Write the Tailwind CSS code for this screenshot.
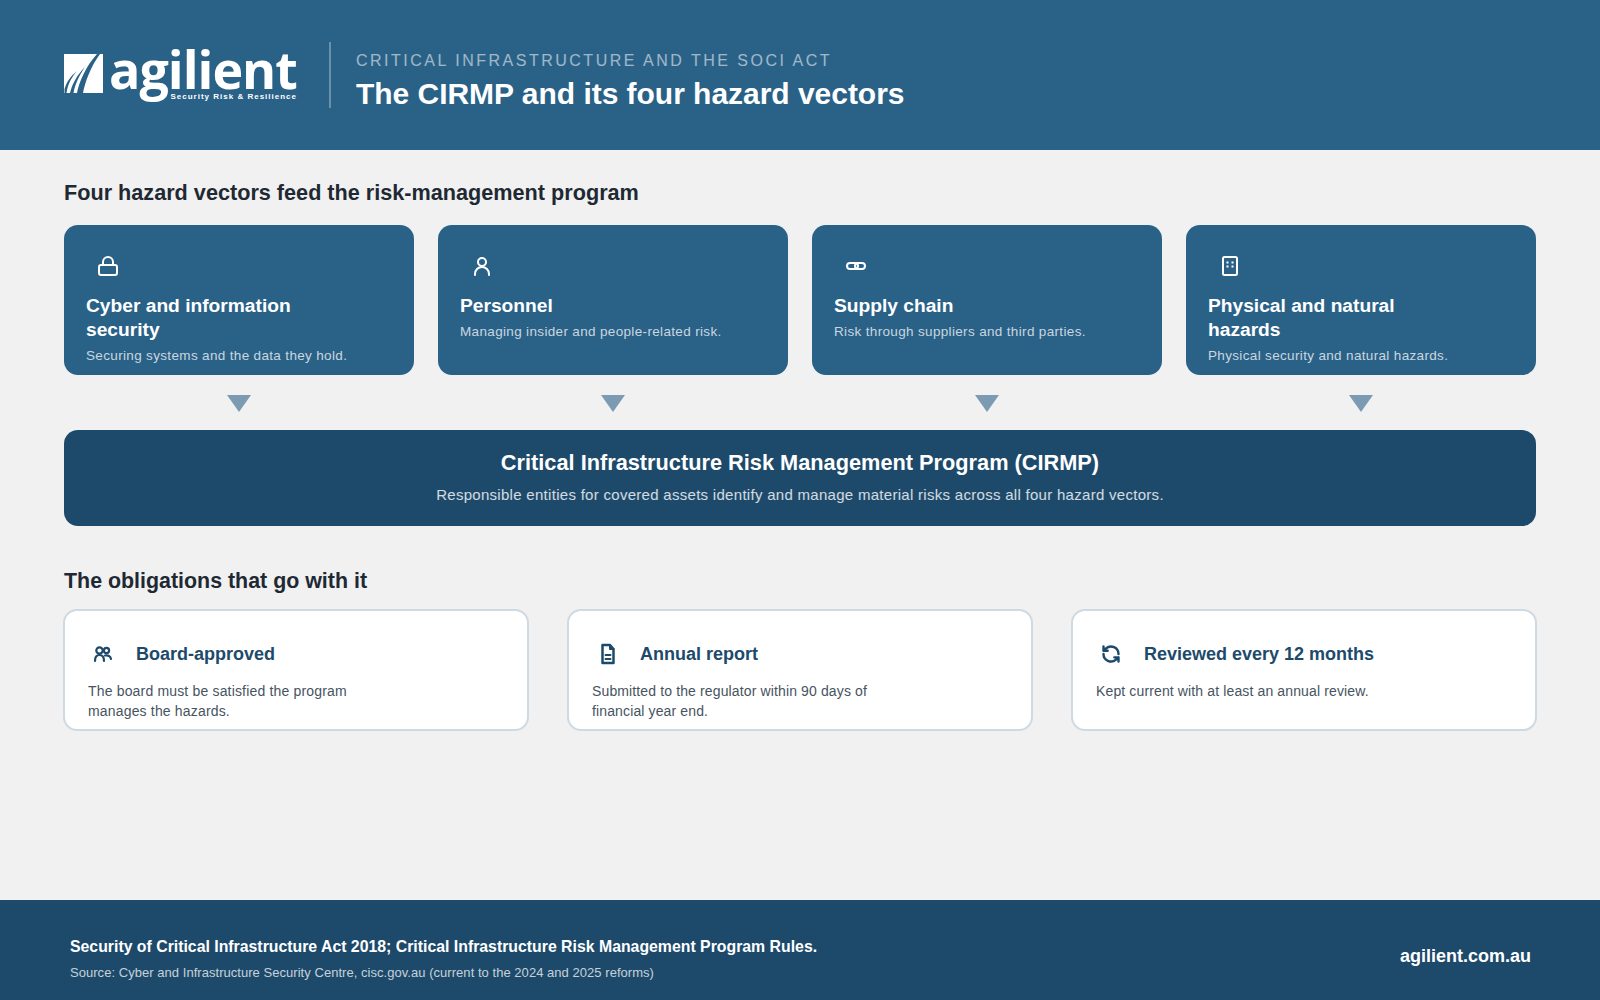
<!doctype html>
<html><head><meta charset="utf-8"><script src="https://cdn.jsdelivr.net/npm/@tailwindcss/browser@4"></script></head>
<body class="m-0">
<div class="w-[1600px] h-[1000px] flex flex-col bg-[#f1f1f1] font-['Liberation_Sans',Arial,sans-serif] overflow-hidden">
<header class="h-[150px] shrink-0 bg-[#2a6187] flex items-center px-16 text-white">
  <div class="w-[232px] h-[60px] flex items-start gap-[6px] shrink-0">
    <svg class="w-[39px] h-[39px] mt-[9px] shrink-0" viewBox="0 0 39 39"><rect width="39" height="39" fill="#fff"/><path fill="#2a6187" d="M0.5 35C3 27 7 22 13 17C8 23 4 29 2.500 39H0.500ZM6 39C8 30 13 21 21 13C15 22 11 30 9.500 39ZM13 39C15 28 22 12 33 0H36C27 12 21 28 19 39Z"/></svg>
    <div class="relative h-[60px] w-[187px]">
      <span class="absolute left-0 top-[-11px] font-['Open_Sans',sans-serif] font-bold text-[52px] leading-[70px] tracking-[-1px] whitespace-nowrap">agilient</span>
      <span class="absolute right-[-1px] top-[47px] text-[8px] leading-[10px] font-bold tracking-[1px] whitespace-nowrap">Security Risk &amp; Resilience</span>
    </div>
  </div>
  <div class="w-[2px] h-[66px] bg-white/30 ml-[33px] mr-[25px]"></div>
  <div class="pt-[12px]">
    <div class="text-[16px] leading-[22px] tracking-[2.5px] uppercase text-white/55">Critical infrastructure and the SOCI Act</div>
    <div class="text-[30px] leading-[38px] font-bold mt-[3px] tracking-[-0.03px]">The CIRMP and its four hazard vectors</div>
  </div>
</header>
<main class="flex-1 px-16 pt-[29px]">
  <h2 class="text-[21.65px] leading-[28px] font-bold text-[#1f2933]">Four hazard vectors feed the risk-management program</h2>
  <div class="grid grid-cols-4 gap-6 mt-[18px]">
    <div class="h-[150px] overflow-hidden rounded-[14px] bg-[#2a6187] text-white px-[22px] pt-[23px]">
      <div class="h-[36px] flex items-center"><svg class="w-[24px] h-[24px] ml-[10px]" viewBox="0 0 24 24" fill="none" stroke="currentColor" stroke-width="2" stroke-linecap="round" stroke-linejoin="round"><rect x="3" y="11" width="18" height="10" rx="2"/><path d="M7 11V8a5 5 0 0 1 10 0v3"/></svg></div>
      <div class="text-[19.2px] leading-[24px] font-bold mt-[10px] max-w-[260px]">Cyber and information security</div>
      <div class="text-[13.5px] leading-[18px] mt-[5px] tracking-[0.34px] text-white/75">Securing systems and the data they hold.</div>
    </div>
    <div class="h-[150px] overflow-hidden rounded-[14px] bg-[#2a6187] text-white px-[22px] pt-[23px]">
      <div class="h-[36px] flex items-center"><svg class="w-[24px] h-[24px] ml-[10px]" viewBox="0 0 24 24" fill="none" stroke="currentColor" stroke-width="2" stroke-linecap="round" stroke-linejoin="round"><circle cx="12" cy="8" r="4"/><path d="M5 21v-1a7 7 0 0 1 14 0v1"/></svg></div>
      <div class="text-[19.2px] leading-[24px] font-bold mt-[10px] max-w-[260px]">Personnel</div>
      <div class="text-[13.5px] leading-[18px] mt-[5px] tracking-[0.34px] text-white/75">Managing insider and people-related risk.</div>
    </div>
    <div class="h-[150px] overflow-hidden rounded-[14px] bg-[#2a6187] text-white px-[22px] pt-[23px]">
      <div class="h-[36px] flex items-center"><svg class="w-[24px] h-[24px] ml-[10px]" viewBox="0 0 24 24" fill="none" stroke="currentColor" stroke-width="2" stroke-linecap="round" stroke-linejoin="round"><rect x="3" y="9" width="11" height="6" rx="3"/><rect x="11" y="9" width="10" height="6" rx="3"/></svg></div>
      <div class="text-[19.2px] leading-[24px] font-bold mt-[10px] max-w-[260px]">Supply chain</div>
      <div class="text-[13.5px] leading-[18px] mt-[5px] tracking-[0.34px] text-white/75">Risk through suppliers and third parties.</div>
    </div>
    <div class="h-[150px] overflow-hidden rounded-[14px] bg-[#2a6187] text-white px-[22px] pt-[23px]">
      <div class="h-[36px] flex items-center"><svg class="w-[24px] h-[24px] ml-[10px]" viewBox="0 0 24 24" fill="none" stroke="currentColor" stroke-width="2" stroke-linecap="round" stroke-linejoin="round"><rect x="5" y="3" width="14" height="18" rx="1.500"/><path fill="currentColor" stroke="none" d="M8.500 7.500h2v2h-2zM13.500 7.500h2v2h-2zM8.500 11.500h2v2h-2zM13.500 11.500h2v2h-2z"/></svg></div>
      <div class="text-[19.2px] leading-[24px] font-bold mt-[10px] max-w-[260px]">Physical and natural hazards</div>
      <div class="text-[13.5px] leading-[18px] mt-[5px] tracking-[0.34px] text-white/75">Physical security and natural hazards.</div>
    </div>
  </div>
  <div class="grid grid-cols-4 gap-6 h-[55px] items-center justify-items-center">
    <div class="w-0 h-0 border-x-[12px] border-x-transparent border-t-[17px] border-t-[#7c9ab1] mt-[1px]"></div>
    <div class="w-0 h-0 border-x-[12px] border-x-transparent border-t-[17px] border-t-[#7c9ab1] mt-[1px]"></div>
    <div class="w-0 h-0 border-x-[12px] border-x-transparent border-t-[17px] border-t-[#7c9ab1] mt-[1px]"></div>
    <div class="w-0 h-0 border-x-[12px] border-x-transparent border-t-[17px] border-t-[#7c9ab1] mt-[1px]"></div>
  </div>
  <div class="h-[96px] rounded-[14px] bg-[#1d4a6b] text-white flex flex-col items-center pt-[19px]">
    <div class="text-[21.75px] leading-[28px] font-bold">Critical Infrastructure Risk Management Program (CIRMP)</div>
    <div class="text-[15px] leading-[22px] mt-[7px] tracking-[0.29px] text-white/80">Responsible entities for covered assets identify and manage material risks across all four hazard vectors.</div>
  </div>
  <h2 class="text-[21.4px] leading-[28px] font-bold text-[#1f2933] mt-[41px]">The obligations that go with it</h2>
  <div class="grid grid-cols-3 gap-[38px] mt-[14px] -mx-px">
    <div class="h-[122px] overflow-hidden rounded-[14px] bg-white border-2 border-[#cfd9e2] pl-[23px] pt-[25px]">
      <div class="flex items-center h-[36px] text-[#1d4a6b]">
        <svg class="w-[24px] h-[24px] ml-[3px] shrink-0" viewBox="0 0 24 24" fill="none" stroke="currentColor" stroke-width="2.200" stroke-linecap="round" stroke-linejoin="round"><circle cx="8.500" cy="8.500" r="3.200"/><circle cx="15.500" cy="8.500" r="2.600"/><path d="M4 19c0-3.500 1.500-6 4.500-6s4.500 2.500 4.500 6M14 13.500c3-.5 5.500 .5 6 3.500"/></svg>
        <div class="text-[18px] font-bold ml-[21px]">Board-approved</div>
      </div>
      <div class="text-[14px] leading-[20px] mt-[9px] tracking-[0.17px] text-[#46545f] max-w-[290px]">The board must be satisfied the program manages the hazards.</div>
    </div>
    <div class="h-[122px] overflow-hidden rounded-[14px] bg-white border-2 border-[#cfd9e2] pl-[23px] pt-[25px]">
      <div class="flex items-center h-[36px] text-[#1d4a6b]">
        <svg class="w-[24px] h-[24px] ml-[4px] shrink-0" viewBox="0 0 24 24" fill="none" stroke="currentColor" stroke-width="2.500" stroke-linecap="round" stroke-linejoin="round"><path d="M14 3H6.500v18h11V7Z"/><path d="M14 3v4h3.500M9.500 13h5M9.500 17h5" stroke-width="2"/></svg>
        <div class="text-[18px] font-bold ml-[20px]">Annual report</div>
      </div>
      <div class="text-[14px] leading-[20px] mt-[9px] tracking-[0.13px] text-[#46545f] max-w-[290px]">Submitted to the regulator within 90 days of financial year end.</div>
    </div>
    <div class="h-[122px] overflow-hidden rounded-[14px] bg-white border-2 border-[#cfd9e2] pl-[23px] pt-[25px]">
      <div class="flex items-center h-[36px] text-[#1d4a6b]">
        <svg class="w-[20px] h-[20px] ml-[5px] shrink-0" viewBox="0 0 24 24" fill="none" stroke="currentColor" stroke-width="2.900" stroke-linecap="round" stroke-linejoin="round"><path d="M21 12a9 9 0 0 0-15-6.700L3 8M3 3v5h5M3 12a9 9 0 0 0 15 6.700L21 16M21 21v-5h-5"/></svg>
        <div class="text-[18px] font-bold ml-[23px]">Reviewed every 12 months</div>
      </div>
      <div class="text-[14px] leading-[20px] mt-[9px] tracking-[0.13px] text-[#46545f] max-w-[290px]">Kept current with at least an annual review.</div>
    </div>
  </div>
</main>
<footer class="h-[100px] shrink-0 bg-[#1d4a6b] text-white flex items-center justify-between pl-[70px] pr-[69px] pt-[18px]">
  <div>
    <div class="text-[15.83px] leading-[22px] font-bold">Security of Critical Infrastructure Act 2018; Critical Infrastructure Risk Management Program Rules.</div>
    <div class="text-[13px] leading-[18px] mt-[6px] tracking-[0.04px] text-white/75">Source: Cyber and Infrastructure Security Centre, cisc.gov.au (current to the 2024 and 2025 reforms)</div>
  </div>
  <div class="text-[18px] font-bold mt-[-6px]">agilient.com.au</div>
</footer>
</div>
</body></html>
